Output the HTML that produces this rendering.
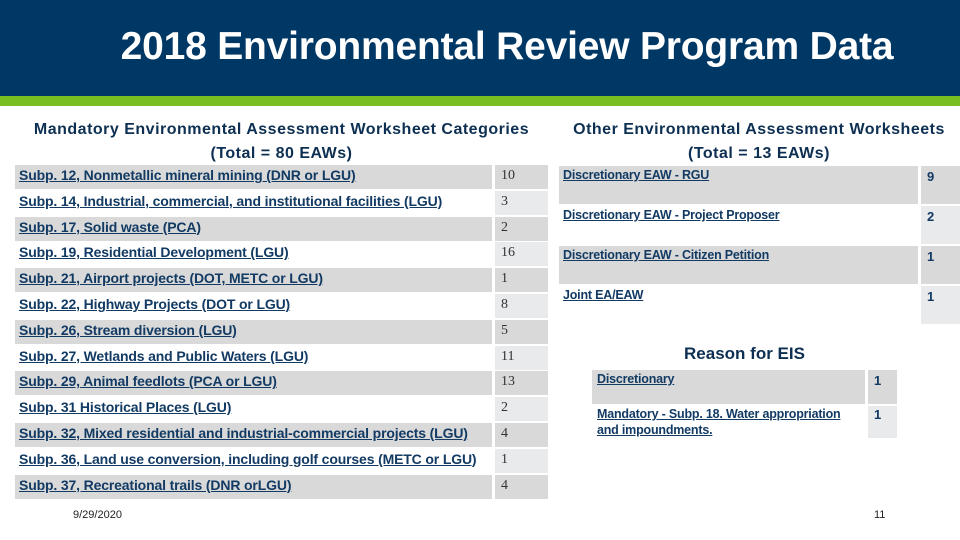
<!DOCTYPE html>
<html><head><meta charset="utf-8"><style>
*{margin:0;padding:0;box-sizing:border-box}
body{width:960px;height:540px;background:#fff;position:relative;overflow:hidden;font-family:"Liberation Sans",sans-serif;color:#0d2f52}
.hdr{position:absolute;left:0;top:0;width:960px;height:96px;background:#003865}
.grn{position:absolute;left:0;top:96px;width:960px;height:10px;background:#78be21}
h1{position:absolute;left:0;top:25px;width:1014px;text-align:center;color:#fff;font-size:39px;font-weight:bold;letter-spacing:-0.2px}
.t{position:absolute;text-align:center;font-size:16px;line-height:24px;color:#0d2f52;font-weight:bold;letter-spacing:0.5px}
.c{position:absolute;font-size:14px;font-weight:bold;letter-spacing:-0.15px;padding:2px 4px;text-decoration:underline;color:#123a63;white-space:nowrap}
.r{font-size:12.5px;letter-spacing:-0.2px}
.n{position:absolute;font-size:14px;padding:3px 6px;color:#333;font-family:"Liberation Serif",serif}
.nb{position:absolute;font-size:13px;font-weight:bold;padding:3px 6px;color:#123a63}
.g{background:#d9d9d9}.w{background:#fff}.l{background:#e9eaec}
.f{position:absolute;font-size:11px;color:#222}
</style></head><body>
<div class="hdr"></div><div class="grn"></div>
<h1>2018 Environmental Review Program Data</h1>
<div class="t" style="left:0px;top:118px;width:563px">Mandatory Environmental Assessment Worksheet Categories<br>(Total = 80 EAWs)</div>
<div class="t" style="left:548px;top:118px;width:422px">Other Environmental Assessment Worksheets<br>(Total = 13 EAWs)</div>
<div class="t" style="left:592px;top:342px;width:305px;font-size:17px;letter-spacing:0">Reason for EIS</div>
<div id="L"></div>
<script>
var rows=[["Subp. 12, Nonmetallic mineral mining (DNR or LGU)","10"],["Subp. 14, Industrial, commercial, and institutional facilities (LGU)","3"],["Subp. 17, Solid waste (PCA)","2"],["Subp. 19, Residential Development (LGU)","16"],["Subp. 21, Airport projects (DOT, METC or LGU)","1"],["Subp. 22, Highway Projects (DOT or LGU)","8"],["Subp. 26, Stream diversion (LGU)","5"],["Subp. 27, Wetlands and Public Waters (LGU)","11"],["Subp. 29, Animal feedlots (PCA or LGU)","13"],["Subp. 31 Historical Places (LGU)","2"],["Subp. 32, Mixed residential and industrial-commercial projects (LGU)","4"],["Subp. 36, Land use conversion, including golf courses (METC or LGU)","1"],["Subp. 37, Recreational trails (DNR orLGU)","4"]];
var h="";
rows.forEach(function(r,i){var y=165+i*25.8;var a=i%2==0;
h+='<div class="c '+(a?'g':'w')+'" style="left:15px;top:'+y+'px;width:477px;height:24px">'+r[0]+'</div>';
h+='<div class="n '+(a?'g':'l')+'" style="left:495px;top:'+y+'px;width:53px;height:24px">'+r[1]+'</div>';});
var o=[["Discretionary EAW - RGU","9"],["Discretionary EAW - Project Proposer","2"],["Discretionary EAW - Citizen Petition","1"],["Joint EA/EAW","1"]];
o.forEach(function(r,i){var y=166+i*40;var a=i%2==0;
h+='<div class="c r '+(a?'g':'w')+'" style="left:559px;top:'+y+'px;width:359px;height:38px">'+r[0]+'</div>';
h+='<div class="nb '+(a?'g':'l')+'" style="left:921px;top:'+y+'px;width:39px;height:38px">'+r[1]+'</div>';});
h+='<div class="c r g" style="left:592px;top:370px;width:273px;height:34px;padding:2px 5px">Discretionary</div>';
h+='<div class="nb g" style="left:868px;top:370px;width:29px;height:34px">1</div>';
h+='<div class="c r w" style="left:592px;top:406px;width:273px;height:32px;padding:0 5px;line-height:16px;white-space:normal">Mandatory - Subp. 18. Water appropriation and impoundments.</div>';
h+='<div class="nb l" style="left:868px;top:406px;width:29px;height:32px;padding:1px 6px">1</div>';
document.getElementById("L").innerHTML=h;
</script>
<div class="f" style="left:73px;top:509px">9/29/2020</div>
<div class="f" style="left:874px;top:509px">11</div>
</body></html>
